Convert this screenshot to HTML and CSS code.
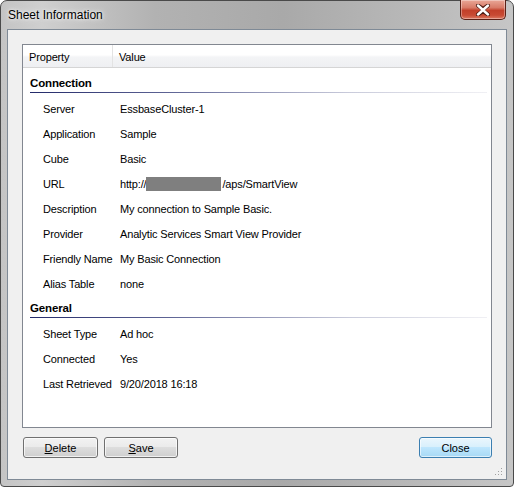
FILE: index.html
```html
<!DOCTYPE html>
<html>
<head>
<meta charset="utf-8">
<link rel="stylesheet" href="styles.css">
</head>
<body>
<div class="window">
  <div class="titlebar">
    <span class="title">Sheet Information</span>
    <button class="close-x" aria-label="Close">
      <svg width="16" height="12" viewBox="0 0 16 12">
        <path d="M3 1.5 L8 5 L13 1.5 M3 10.5 L8 7 L13 10.5 M8 5 L8 7" fill="none" stroke="#4a1a12" stroke-width="4" stroke-linecap="round" stroke-linejoin="round"/>
        <path d="M3 1.5 L13 10.5 M13 1.5 L3 10.5" fill="none" stroke="#fff" stroke-width="2.4" stroke-linecap="round"/>
      </svg>
    </button>
  </div>
  <div class="client">
    <div class="panel">
      <div class="head">
        <div class="hcell hprop">Property</div>
        <div class="hcell hval">Value</div>
      </div>
      <div class="group first">Connection</div>
      <div class="row"><span class="k">Server</span><span class="v">EssbaseCluster-1</span></div>
      <div class="row"><span class="k">Application</span><span class="v">Sample</span></div>
      <div class="row"><span class="k">Cube</span><span class="v">Basic</span></div>
      <div class="row"><span class="k">URL</span><span class="v">http://<span class="redact"></span>/aps/SmartView</span></div>
      <div class="row"><span class="k">Description</span><span class="v">My connection to Sample Basic.</span></div>
      <div class="row"><span class="k">Provider</span><span class="v">Analytic Services Smart View Provider</span></div>
      <div class="row"><span class="k">Friendly Name</span><span class="v">My Basic Connection</span></div>
      <div class="row"><span class="k">Alias Table</span><span class="v">none</span></div>
      <div class="group">General</div>
      <div class="row"><span class="k">Sheet Type</span><span class="v">Ad hoc</span></div>
      <div class="row"><span class="k">Connected</span><span class="v">Yes</span></div>
      <div class="row"><span class="k">Last Retrieved</span><span class="v">9/20/2018 16:18</span></div>
    </div>
    <div class="buttons">
      <button class="btn"><u>D</u>elete</button>
      <button class="btn save"><u>S</u>ave</button>
      <button class="btn default">Close</button>
    </div>
    <div class="grip">
      <svg width="8" height="8" viewBox="0 0 8 8">
        <rect x="6" y="0" width="1" height="1" fill="#a0a0a0"/>
        <rect x="3" y="3" width="1" height="1" fill="#a0a0a0"/>
        <rect x="6" y="3" width="1" height="1" fill="#a0a0a0"/>
        <rect x="0" y="6" width="1" height="1" fill="#a0a0a0"/>
        <rect x="3" y="6" width="1" height="1" fill="#a0a0a0"/>
        <rect x="6" y="6" width="1" height="1" fill="#a0a0a0"/>
      </svg>
    </div>
  </div>
</div>
</body>
</html>
```
FILE: styles.css
```css
html, body {
  margin: 0;
  padding: 0;
  background: #ffffff;
}
body {
  width: 514px;
  height: 487px;
  font-family: "Liberation Sans", Arial, sans-serif;
  font-size: 11px;
  color: #000;
}
.window {
  box-sizing: border-box;
  width: 514px;
  height: 487px;
  border: 1px solid #4a4a4a;
  border-radius: 7px 7px 4px 4px;
  background: linear-gradient(to right, #c4c4c4 0%, #cfcfcf 8%, #b2b2b2 30%, #a9a9a9 55%, #b8b8b8 80%, #c6c6c6 100%);
  display: flex;
  flex-direction: column;
  padding: 0 6px 6px 6px;
}
.titlebar {
  height: 28px;
  display: flex;
  align-items: flex-start;
  justify-content: space-between;
}
.title {
  margin-top: 7px;
  margin-left: 1px;
  font-size: 12px;
  color: #000;
  text-shadow: 0 0 6px rgba(255,255,255,0.9), 0 0 3px rgba(255,255,255,0.9);
}
.close-x {
  width: 46px;
  height: 20px;
  margin-right: 1px;
  margin-top: -1px;
  padding: 0;
  border: 1px solid #5a2016;
  border-top: none;
  border-radius: 0 0 5px 5px;
  background: linear-gradient(to bottom, #e9a797 0%, #d87b68 40%, #c2402a 55%, #c84a33 80%, #dc7a63 100%);
  box-shadow: inset 0 0 0 1px rgba(255,255,255,0.35);
  display: flex;
  align-items: center;
  justify-content: center;
}
.client {
  flex: 1;
  box-sizing: border-box;
  border: 1px solid #7f8a96;
  background: #f0f0f0;
  padding: 14px 14px 0 14px;
  display: flex;
  flex-direction: column;
  position: relative;
}
.panel {
  height: 384px;
  box-sizing: border-box;
  border: 1px solid #828790;
  background: #ffffff;
  letter-spacing: -0.15px;
}
.head {
  height: 23px;
  box-sizing: border-box;
  display: flex;
  border-bottom: 1px solid #d5d5d5;
  background: linear-gradient(to bottom, #ffffff 0%, #ffffff 45%, #f3f4f6 55%, #eeeff2 100%);
}
.hcell {
  padding-top: 3px;
  line-height: 19px;
  box-sizing: border-box;
}
.hprop {
  width: 90px;
  padding-left: 6px;
  border-right: 1px solid #e3e3e3;
}
.hval {
  padding-left: 6px;
}
.group {
  margin: 0 4px 2px 7px;
  height: 23px;
  padding-top: 3px;
  line-height: 20px;
  box-sizing: border-box;
  font-weight: bold;
  font-size: 11.5px;
  position: relative;
}
.group.first {
  margin-top: 2px;
}
.group::after {
  content: "";
  position: absolute;
  left: 0;
  right: 0;
  bottom: 0;
  height: 1px;
  background: linear-gradient(to right, #232a6a 0%, #5d6394 30%, #c9cbdb 70%, #f0f0f4 100%);
}
.row {
  height: 25px;
  box-sizing: border-box;
  padding-top: 3px;
  display: flex;
  align-items: center;
}
.k {
  width: 97px;
  padding-left: 20px;
  box-sizing: border-box;
}
.v {
  display: flex;
  align-items: center;
}
.redact {
  display: inline-block;
  width: 75px;
  height: 14px;
  background: #7f7f7f;
  margin: 0 1px 0 0;
}
.buttons {
  display: flex;
  margin-top: 9px;
  gap: 6px;
  padding-left: 1px;
}
.btn {
  width: 75px;
  height: 21px;
  box-sizing: border-box;
  font-family: "Liberation Sans", Arial, sans-serif;
  font-size: 11px;
  color: #000;
  border: 1px solid #707070;
  border-radius: 3px;
  background: linear-gradient(to bottom, #f2f2f2 0%, #ebebeb 45%, #dddddd 50%, #cfcfcf 100%);
  box-shadow: inset 0 0 0 1px rgba(255,255,255,0.7);
  padding: 0;
}
.btn.save {
  width: 74px;
}
.btn.default {
  margin-left: auto;
  width: 73px;
  border-color: #3c7fb1;
  background: linear-gradient(to bottom, #eaf6fd 0%, #d9f0fc 45%, #bee6fd 50%, #a7d9f5 100%);
  box-shadow: inset 0 0 0 1px rgba(255,255,255,0.6);
}
.grip {
  position: absolute;
  right: 3px;
  bottom: 3px;
  width: 8px;
  height: 8px;
  line-height: 0;
}
```
